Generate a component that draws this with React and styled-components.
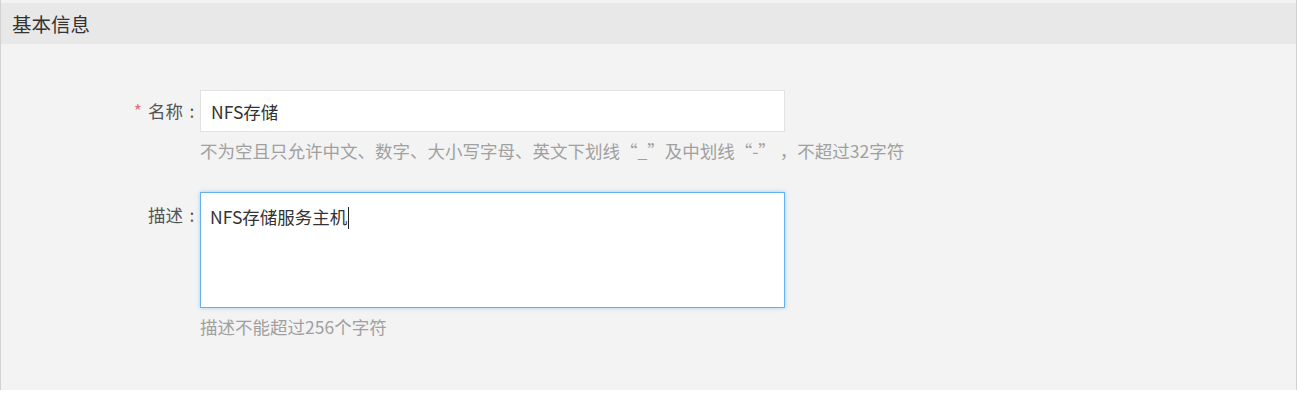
import React from 'react';
import styled, { createGlobalStyle } from 'styled-components';

const GlobalStyle = createGlobalStyle`
    html, body {
        margin: 0;
        padding: 0;
        background: #fff;
    }
    body {
        font-family: "Noto Sans CJK SC", "Noto Sans", sans-serif;
        color: #333;
    }
`;

const Panel = styled.div`
    width: 1297px;
    height: 390px;
    box-sizing: border-box;
    padding-top: 3px;
    background-color: #f3f3f3;
    border-left: 1px solid #d2d2d2;
    border-right: 1px solid #d2d2d2;
`;

const PanelHeader = styled.div`
    height: 41px;
    display: flex;
    align-items: center;
    padding-left: 11px;
    background-color: #e8e8e8;
    font-size: 19.5px;
    color: #333;
`;

const Form = styled.div`
    display: grid;
    grid-template-columns: 199px 585px;
    align-items: start;
    padding-top: 46px;
`;

const Label = styled.div`
    height: 42px;
    margin-right: -1px;
    line-height: ${({ $offset }) => 42 + ($offset || 0) * 2}px;
    text-align: right;
    font-size: 17.5px;
    color: #555;
    white-space: nowrap;
`;

const Colon = styled.span`
    display: inline-block;
    width: 18px;
    text-align: center;
`;

const Required = styled.span`
    color: #e07070;
    margin-right: 6px;
`;

const Field = styled.div`
    display: flex;
    flex-direction: column;
`;

const TextInput = styled.div`
    height: 42px;
    box-sizing: border-box;
    padding: 0 10px;
    display: flex;
    align-items: center;
    background: #fff;
    border: 1px solid #e2e2e2;
    font-size: 17.5px;
    color: #333;
`;

const TextArea = styled.div`
    height: 116px;
    box-sizing: border-box;
    padding: 12px 9px;
    background: #fff;
    border: 1px solid #62b2f2;
    box-shadow: 0 0 4px rgba(102, 175, 233, 0.55);
    font-size: 17.5px;
    line-height: 24px;
    color: #333;
`;

const Caret = styled.span`
    display: inline-block;
    width: 1px;
    height: 22px;
    margin-left: 1px;
    vertical-align: -5px;
    background: #222;
`;

const Hint = styled.div`
    margin-top: 9px;
    margin-bottom: ${({ $last }) => ($last ? 0 : 31)}px;
    font-size: 17.5px;
    line-height: 20px;
    color: #a0a0a0;
    white-space: nowrap;
`;

function App() {
    return (
        <>
            <GlobalStyle />
            <Panel>
                <PanelHeader>基本信息</PanelHeader>
                <Form>
                    <Label>
                        <Required>*</Required>名称<Colon>:</Colon>
                    </Label>
                    <Field>
                        <TextInput>NFS存储</TextInput>
                        <Hint>不为空且只允许中文、数字、大小写字母、英文下划线“_”及中划线“-” ，不超过32字符</Hint>
                    </Field>
                    <Label $offset={2}>
                        描述<Colon>:</Colon>
                    </Label>
                    <Field>
                        <TextArea>
                            NFS存储服务主机<Caret />
                        </TextArea>
                        <Hint $last>描述不能超过256个字符</Hint>
                    </Field>
                </Form>
            </Panel>
        </>
    );
}

export default App;
